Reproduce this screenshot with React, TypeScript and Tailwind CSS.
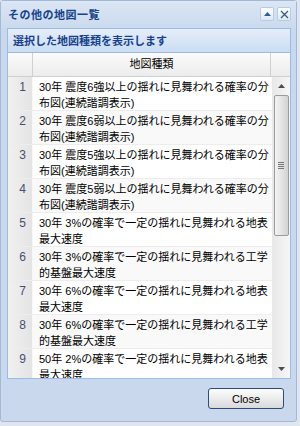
import React from 'react';

const rows = [
  ['30年 震度6強以上の揺れに見舞われる確率の分', '布図(連続諧調表示)'],
  ['30年 震度6弱以上の揺れに見舞われる確率の分', '布図(連続諧調表示)'],
  ['30年 震度5強以上の揺れに見舞われる確率の分', '布図(連続諧調表示)'],
  ['30年 震度5弱以上の揺れに見舞われる確率の分', '布図(連続諧調表示)'],
  ['30年 3%の確率で一定の揺れに見舞われる地表', '最大速度'],
  ['30年 3%の確率で一定の揺れに見舞われる工学', '的基盤最大速度'],
  ['30年 6%の確率で一定の揺れに見舞われる地表', '最大速度'],
  ['30年 6%の確率で一定の揺れに見舞われる工学', '的基盤最大速度'],
  ['50年 2%の確率で一定の揺れに見舞われる地表', '最大速度'],
];

const ToolButton = ({ children }: { children: React.ReactNode }) => (
  <div className="w-[14px] h-[14px] rounded-[2px] border border-[#b9cbe4] bg-gradient-to-b from-[#ffffff] to-[#dde7f5] flex items-center justify-center">
    {children}
  </div>
);

const Scrollbar = () => (
  <div className="w-[18px] bg-gradient-to-r from-[#e8e8e8] to-[#f6f6f6] flex flex-col items-center">
    <div className="h-[18px] flex items-center justify-center">
      <svg width="7" height="4" viewBox="0 0 7 4">
        <path d="M0 4 L3.5 0 L7 4 Z" fill="#4d4d4d" />
      </svg>
    </div>
    <div className="w-[15px] h-[141px] rounded-[2px] border border-[#9b9b9b] bg-gradient-to-r from-[#f3f3f3] via-[#e4e4e4] to-[#d2d2d2] flex items-center justify-center">
      <div className="flex flex-col gap-[1px]">
        <div className="w-[6px] h-[1px] bg-[#777]" />
        <div className="w-[6px] h-[1px] bg-[#777]" />
        <div className="w-[6px] h-[1px] bg-[#777]" />
        <div className="w-[6px] h-[1px] bg-[#777]" />
      </div>
    </div>
    <div className="flex-1" />
    <div className="h-[18px] flex items-center justify-center">
      <svg width="7" height="4" viewBox="0 0 7 4">
        <path d="M0 0 L3.5 4 L7 0 Z" fill="#4d4d4d" />
      </svg>
    </div>
  </div>
);

export default function App() {
  return (
    <div className="w-[300px] h-[426px] bg-[#dfe6ef] font-['Liberation_Sans','Noto_Sans_CJK_JP',sans-serif]">
      <div className="w-[297px] h-[422px] rounded-[3px] border border-[#a3b9d6] bg-[#c9d8ec] flex flex-col">
        {/* title bar */}
        <div className="h-[27px] flex items-center justify-between pl-[7px] pr-[5px] bg-gradient-to-b from-[#dbe6f4] to-[#cbdaee]">
          <span className="text-[11px] font-bold tracking-[0.5px] text-[#15428b] leading-[14px]">その他の地図一覧</span>
          <div className="flex gap-[3px] pb-[1px]">
            <ToolButton>
              <svg width="7" height="4" viewBox="0 0 7 4">
                <path d="M0 4 L3.5 0 L7 4 Z" fill="#2a59a8" />
              </svg>
            </ToolButton>
            <ToolButton>
              <svg width="9" height="9" viewBox="0 0 9 9">
                <path d="M1 1 L8 8 M8 1 L1 8" stroke="#3a5a8c" strokeWidth="1.3" />
              </svg>
            </ToolButton>
          </div>
        </div>

        {/* panel */}
        <div className="ml-[6px] w-[284px] border border-[#99bbe8] flex flex-col bg-white">
          <div className="h-[24px] flex items-center pl-[5px] border-b border-[#99bbe8] bg-gradient-to-b from-[#e6eef9] to-[#cadcf3]">
            <span className="text-[11px] font-bold text-[#15428b] leading-[14px]">選択した地図種類を表示します</span>
          </div>
          <div className="h-[24px] flex border-b border-[#d0d0d0] bg-gradient-to-b from-[#fbfbfb] to-[#ececec] text-[11px] text-black">
            <div className="w-[25px] border-r border-[#d0d0d0]" />
            <div className="w-[238px] border-r border-[#d0d0d0] flex items-center justify-center">地図種類</div>
            <div className="flex-1" />
          </div>
          <div className="h-[301px] flex overflow-hidden">
            <div className="w-[264px] flex flex-col">
              {rows.map((r, i) => (
                <div
                  key={i}
                  className={`h-[34px] shrink-0 flex border-b border-[#ededed] ${i % 2 === 1 ? 'bg-[#f9f9f9]' : 'bg-white'}`}
                >
                  <div className="w-[25px] shrink-0 border-r border-[#f7f7f7] bg-gradient-to-r from-[#f1f1f1] to-[#e4e4e4] text-right pr-[6px] pt-[2px] text-[12px] leading-[16px] text-[#4a4d6a]">
                    {i + 1}
                  </div>
                  <div className="flex-1 pl-[6px] pt-[2px] text-[11px] leading-[16px] text-black whitespace-nowrap">
                    <div>{r[0]}</div>
                    <div>{r[1]}</div>
                  </div>
                </div>
              ))}
            </div>
            <Scrollbar />
          </div>
        </div>

        {/* footer */}
        <div className="flex justify-end pr-[12px] pt-[9px]">
          <button className="w-[76px] h-[21px] rounded-[3px] border border-[#2b4c7e] bg-gradient-to-b from-[#fdfdfd] via-[#ececec] to-[#d9d9d9] text-[11px] text-black leading-[14px]">
            Close
          </button>
        </div>
      </div>
    </div>
  );
}
